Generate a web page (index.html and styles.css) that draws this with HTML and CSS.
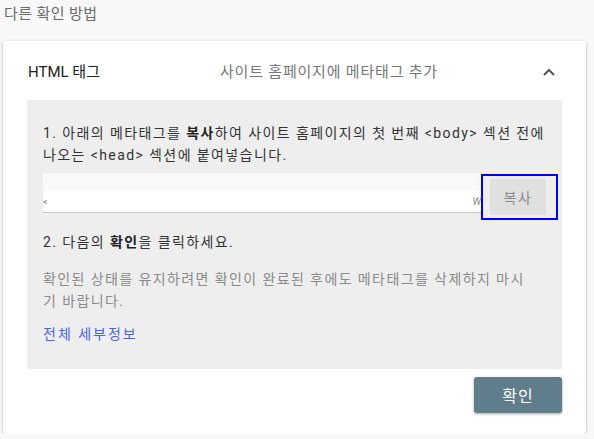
FILE: index.html
```html
<!DOCTYPE html>
<html lang="ko">
<head>
<meta charset="utf-8">
<link rel="stylesheet" href="styles.css">
</head>
<body>
<div class="page-title">다른 확인 방법</div>
<div class="card">
  <div class="card-header">
    <div class="h-title">HTML 태그</div>
    <div class="h-sub">사이트 홈페이지에 메타태그 추가</div>
    <svg class="chevron" width="14" height="10" viewBox="0 0 14 10"><path d="M2 8 L7 3 L12 8" fill="none" stroke="#555" stroke-width="2"/></svg>
  </div>
  <div class="panel">
    <p class="step">1. 아래의 메타태그를 <b>복사</b>하여 사이트 홈페이지의 첫 번째 &lt;body&gt; 섹션 전에<br>나오는 &lt;head&gt; 섹션에 붙여넣습니다.</p>
    <div class="copy-row">
      <div class="meta-input">
        <div class="meta-strip"><span class="lt">&lt;</span><span class="wv">W</span></div>
      </div>
      <div class="copy-focus"><button class="copy-btn">복사</button></div>
    </div>
    <p class="step step2">2. 다음의 <b>확인</b>을 클릭하세요.</p>
    <p class="note">확인된 상태를 유지하려면 확인이 완료된 후에도 메타태그를 삭제하지 마시<br>기 바랍니다.</p>
    <a class="details" href="#">전체 세부정보</a>
  </div>
  <div class="card-footer">
    <button class="confirm">확인</button>
  </div>
</div>
</body>
</html>
```
FILE: styles.css
```css
html, body {
  margin: 0;
  padding: 0;
  background: #f8f8f8;
  font-family: "Roboto", "Noto Sans CJK KR", sans-serif;
}
.page-title {
  padding: 4px 0 0 4px;
  height: 41px;
  box-sizing: border-box;
  font-size: 15px;
  line-height: 20px;
  color: #6b6b6b;
  letter-spacing: 0.4px;
}
.card {
  margin-left: 3px;
  width: 583px;
  height: 392px;
  background: #fff;
  border-radius: 2px;
  box-shadow: 0 1px 3px rgba(0,0,0,0.3);
  box-sizing: border-box;
}
.card-header {
  height: 59px;
  display: grid;
  grid-template-columns: 192px 1fr auto;
  align-items: center;
  padding: 0 30px 0 25px;
}
.h-title {
  font-size: 15px;
  color: #222;
}
.h-sub {
  font-size: 15px;
  color: #777;
  letter-spacing: 0.8px;
}
.chevron { display: block; margin-top: 2px; }
.panel {
  margin: 0 24px;
  background: #eeeeee;
  padding: 22px 4px 23px 16px;
  height: 269px;
  box-sizing: border-box;
}
.step {
  margin: 0;
  font-size: 14px;
  line-height: 22px;
  color: #333;
  white-space: nowrap;
  letter-spacing: 1.4px;
}
.step b { font-weight: bold; color: #222; }
.copy-row {
  display: flex;
  margin-top: 7px;
  height: 47px;
}
.meta-input {
  flex: 1;
  height: 40px;
  background: #f9f9f9;
  border-bottom: 1px solid #c8c8c8;
  box-sizing: border-box;
  position: relative;
}
.meta-strip {
  position: absolute;
  left: 0;
  right: 0;
  top: 18px;
  height: 20px;
  background: #fff;
  font-size: 10px;
  color: #777;
}
.meta-strip .lt { position: absolute; left: 0; top: 6px; font-size: 9px; }
.meta-strip .wv { position: absolute; right: 0; top: 5px; font-style: italic; color: #8a8a70; }
.copy-focus {
  width: 77px;
  height: 46px;
  margin-top: 1px;
  border: 2px solid #0000ff;
  box-sizing: border-box;
  padding: 3px 10px 3px 7px;
}
.copy-btn {
  display: block;
  width: 56px;
  height: 36px;
  border: 0;
  border-radius: 2px;
  background: #e0e0e0;
  color: #8a8a8a;
  font-family: "Roboto", "Noto Sans CJK KR", sans-serif;
  font-size: 14px;
  letter-spacing: 1.5px;
  padding: 0;
}
.step2 { margin-top: 11px; }
.note {
  margin: 15px 0 0;
  font-size: 14px;
  line-height: 22px;
  color: #8a8a8a;
  white-space: nowrap;
  letter-spacing: 1.4px;
}
.details {
  display: block;
  margin-top: 11px;
  font-size: 14px;
  line-height: 22px;
  color: #4a63e7;
  text-decoration: none;
  letter-spacing: 2px;
}
.card-footer {
  display: flex;
  justify-content: flex-end;
  padding: 8px 24px 0 0;
}
.confirm {
  width: 88px;
  height: 36px;
  border: 0;
  border-radius: 3px;
  background: #607d8b;
  color: #fff;
  font-family: "Roboto", "Noto Sans CJK KR", sans-serif;
  font-size: 16px;
  letter-spacing: 1px;
  box-shadow: 0 1px 3px rgba(0,0,0,0.35);
}
```
